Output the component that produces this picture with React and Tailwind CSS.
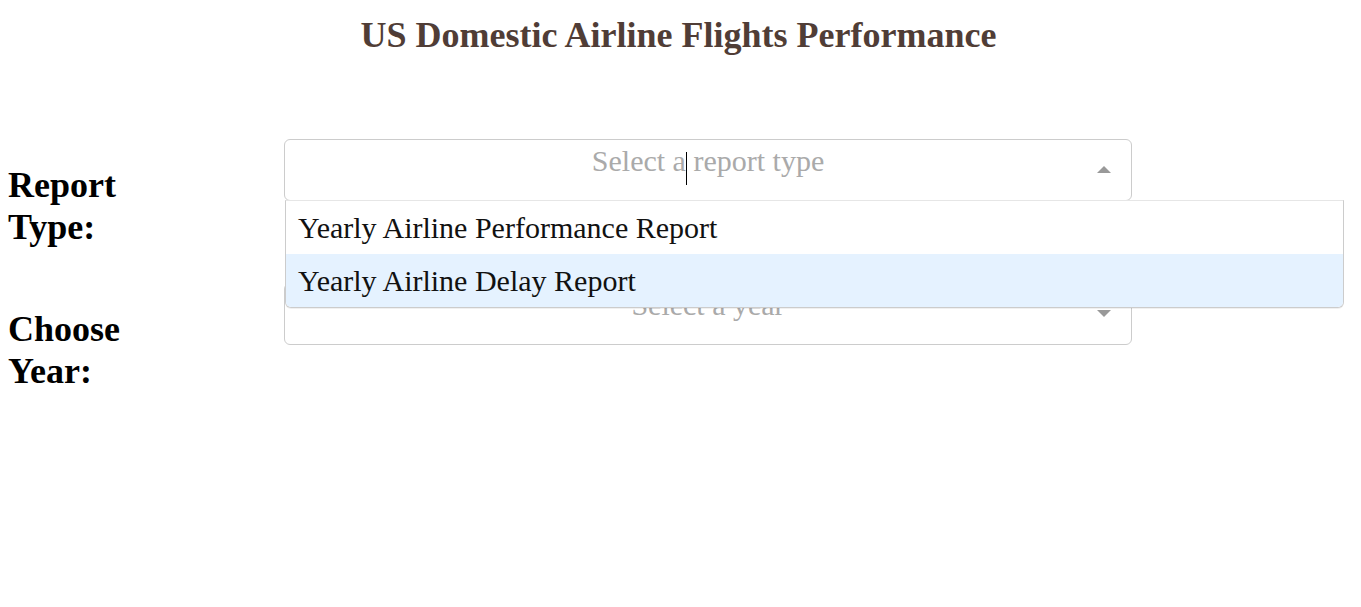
import React from 'react';

const serif = { fontFamily: '"Liberation Serif", "Times New Roman", serif' };

function Arrow({ up }) {
  if (up) {
    return (
      <span className="absolute right-[20px] top-[26px] w-0 h-0 border-x-[7.5px] border-x-transparent border-b-[7.5px] border-b-[#999]" />
    );
  }
  return (
    <span className="absolute right-[20px] top-[26px] w-0 h-0 border-x-[7.5px] border-x-transparent border-t-[7.5px] border-t-[#999]" />
  );
}

function Dropdown({ placeholder, open, options = [], focused }) {
  return (
    <div className="relative w-[848px] shrink-0 mt-[4px]">
      <div className="relative h-[62px] border border-[#ccc] rounded-[6px] bg-white text-center">
        <div className="pt-[4px] text-[30px] leading-[34px] text-[#aaa]">{placeholder}</div>
        {open && <span className="absolute left-[401px] top-[12px] w-px h-[33px] bg-black" />}
        <Arrow up={open} />
      </div>
      {open && (
        <div className="absolute left-[1px] top-[61px] w-[1059px] z-10 bg-white border border-[#ccc] border-t-[#e6e6e6] rounded-b-[6px] shadow-[0_1px_0_rgba(0,0,0,0.06)] overflow-hidden">
          {options.map((o, i) => (
            <div
              key={o}
              className={
                'h-[53px] pl-[12px] text-[30px] leading-[53px] text-[#111] ' +
                (i === focused ? 'bg-[#e5f2ff]' : 'bg-white')
              }
            >
              {o}
            </div>
          ))}
        </div>
      )}
    </div>
  );
}

function Row({ label, children }) {
  return (
    <div className="flex">
      <div className="w-[276px] shrink-0">
        <h2 className="w-[150px] mt-[29px] mb-[31px] text-[36px] leading-[42px] font-bold text-black">{label}</h2>
      </div>
      {children}
    </div>
  );
}

export default function App() {
  return (
    <div className="min-h-[607px] bg-white pl-2 pr-[12px]" style={serif}>
      <h1 className="pt-[15px] text-center text-[36px] leading-[41px] font-bold text-[#503D36]">
        US Domestic Airline Flights Performance
      </h1>
      <div className="mt-[79px]">
        <Row label="Report Type:">
          <Dropdown
            placeholder="Select a report type"
            open
            focused={1}
            options={['Yearly Airline Performance Report', 'Yearly Airline Delay Report']}
          />
        </Row>
        <Row label="Choose Year:">
          <Dropdown placeholder="Select a year" />
        </Row>
      </div>
    </div>
  );
}
